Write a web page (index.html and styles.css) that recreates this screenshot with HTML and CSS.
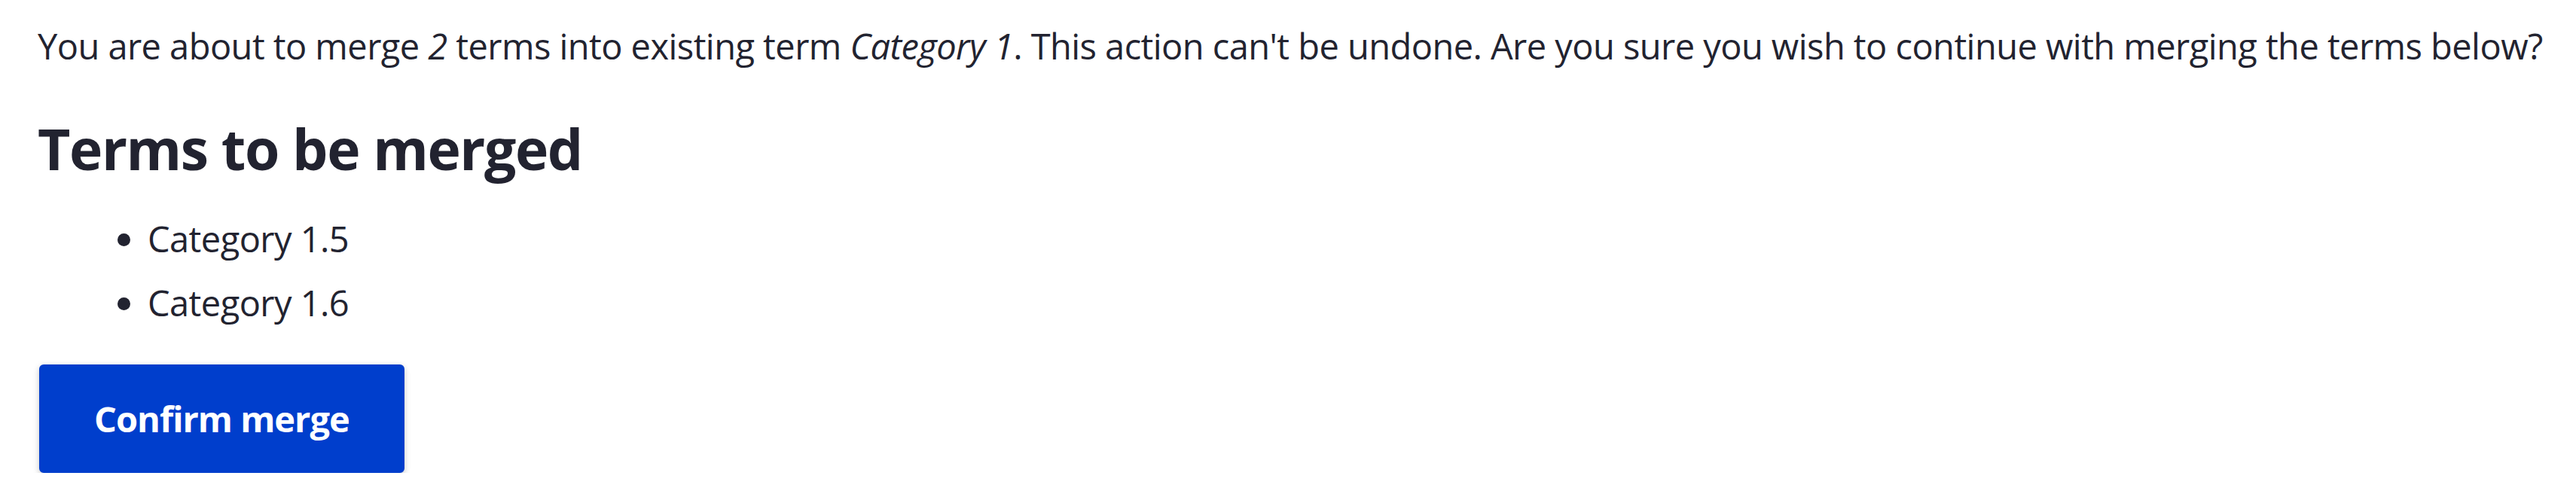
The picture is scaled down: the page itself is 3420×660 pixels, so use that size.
FILE: index.html
```html
<!DOCTYPE html>
<html lang="en">
<head>
<meta charset="utf-8">
<title>Merge terms</title>
<link rel="stylesheet" href="styles.css">
</head>
<body>
<main class="page">
  <p class="intro">You are about to merge <em>2</em> terms into existing term <em>Category 1</em>. This action can't be undone. Are you sure you wish to continue with merging the terms below?</p>
  <h2 class="section-title">Terms to be merged</h2>
  <ul class="term-list">
    <li class="term-list__item">Category 1.5</li>
    <li class="term-list__item">Category 1.6</li>
  </ul>
  <div class="form-actions">
    <button class="button button--primary" type="submit">Confirm merge</button>
  </div>
</main>
</body>
</html>
```

FILE: styles.css
```css
html {
  font-size: 48px;
}
body {
  margin: 0;
  background: #ffffff;
  color: #222330;
  font-family: "Open Sans", "Noto Sans", sans-serif;
  font-size: 47px;
  letter-spacing: -0.55px;
  line-height: 72px;
}
.page {
  padding: 0 50px;
}
.intro {
  margin: 25px 0 0;
  white-space: nowrap;
}
.section-title {
  margin: 54px 0 0;
  font-size: 75px;
  letter-spacing: -1.4px;
  line-height: 92px;
  font-weight: 700;
}
.term-list {
  margin: 38px 0 0;
  padding: 0 0 0 146px;
}
.term-list__item {
  margin: 0;
  letter-spacing: -0.55px;
}
.term-list__item + .term-list__item {
  margin-top: 13px;
}
.form-actions {
  margin-top: 46px;
  padding-left: 2px;
}
.button {
  font-family: inherit;
  font-size: 47px;
  font-weight: 700;
  letter-spacing: -1px;
  line-height: 72px;
  padding: 33px 70px;
  border: 3px solid #003ecc;
  border-radius: 6px;
  background: #003ecc;
  color: #ffffff;
  box-shadow: 0 3px 8px rgba(0, 0, 0, 0.22);
  cursor: pointer;
}
```
